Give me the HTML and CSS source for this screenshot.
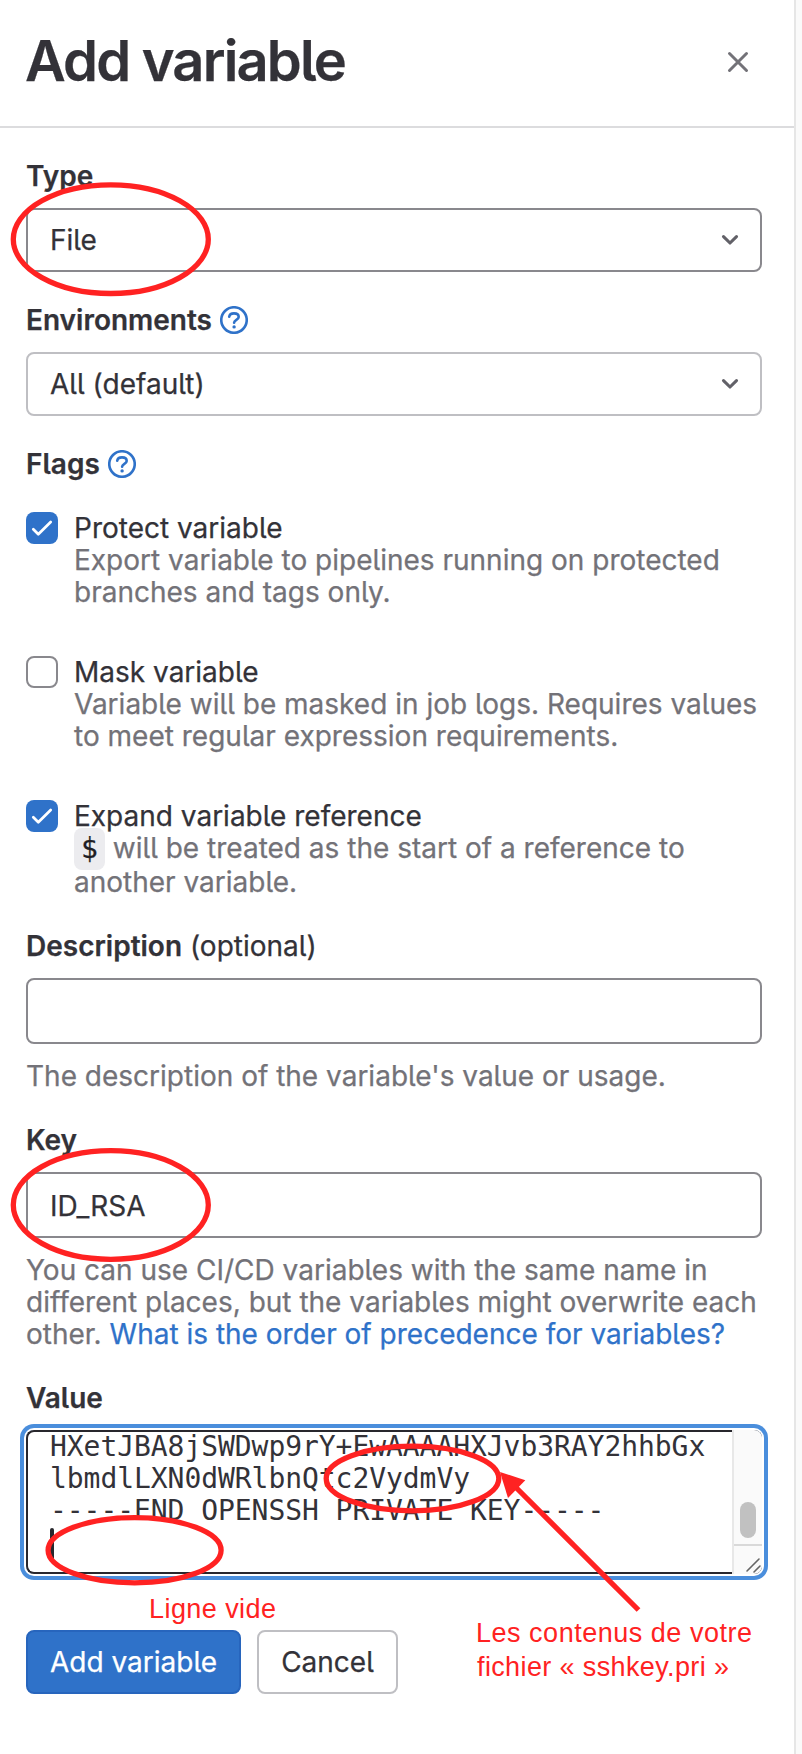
FILE: index.html
```html
<!DOCTYPE html>
<html lang="en">
<head>
<meta charset="utf-8">
<title>Add variable</title>
<link rel="stylesheet" href="styles.css">
</head>
<body>
<div class="drawer">
  <header class="drawer-header">
    <h2 class="title">Add variable</h2>
    <svg class="close" viewBox="0 0 32 32"><path d="M7.500 8.500l17 17M24.500 8.500l-17 17"/></svg>
  </header>
  <main class="form">
    <div class="label"><b>Type</b></div>
    <div class="control"><span>File</span><svg class="chevron" viewBox="0 0 32 32"><path d="M9.500 12.700l6.500 6.300 6.500-6.300"/></svg></div>

    <div class="label mt32"><b>Environments</b><svg class="help-icon" viewBox="0 0 28 28"><circle cx="14" cy="14" r="12.750"/><path d="M9.200 10.800C9.600 8.500 11.500 7.400 14 7.400c2.700 0 4.700 1.400 4.700 3.600 0 2.900-4.600 2.900-4.600 5.800"/><circle class="dot" cx="14.100" cy="20.900" r="1.700"/></svg></div>
    <div class="control light"><span>All (default)</span><svg class="chevron" viewBox="0 0 32 32"><path d="M9.500 12.700l6.500 6.300 6.500-6.300"/></svg></div>

    <div class="label mt32"><b>Flags</b><svg class="help-icon" viewBox="0 0 28 28"><circle cx="14" cy="14" r="12.750"/><path d="M9.200 10.800C9.600 8.500 11.500 7.400 14 7.400c2.700 0 4.700 1.400 4.700 3.600 0 2.900-4.600 2.900-4.600 5.800"/><circle class="dot" cx="14.100" cy="20.900" r="1.700"/></svg></div>
    <div class="checks">
      <div class="check">
        <span class="box on"><svg viewBox="0 0 32 32"><path d="M7.300 17.300l5 5L24.700 10"/></svg></span>
        <div><div>Protect variable</div><p class="muted">Export variable to pipelines running on protected<br>branches and tags only.</p></div>
      </div>
      <div class="check">
        <span class="box"></span>
        <div><div>Mask variable</div><p class="muted">Variable will be masked in job logs. Requires values<br>to meet regular expression requirements.</p></div>
      </div>
      <div class="check">
        <span class="box on"><svg viewBox="0 0 32 32"><path d="M7.300 17.300l5 5L24.700 10"/></svg></span>
        <div><div>Expand variable reference</div><p class="muted expand"><code>$</code> will be treated as the start of a reference to<br>another variable.</p></div>
      </div>
    </div>

    <div class="label mt32"><span><b>Description</b> (optional)</span></div>
    <div class="control input"></div>
    <p class="muted help">The description of the variable's value or usage.</p>

    <div class="label mt32"><b>Key</b></div>
    <div class="control input">ID_RSA</div>
    <p class="muted help">You can use CI/CD variables with the same name in<br>different places, but the variables might overwrite each<br>other. <a>What is the order of precedence for variables?</a></p>

    <div class="label mt32"><b>Value</b></div>
    <div class="textarea">
      <pre class="code">HXetJBA8jSWDwp9rY+EwAAAAHXJvb3RAY2hhbGx
lbmdlLXN0dWRlbnQtc2VydmVy
-----END OPENSSH PRIVATE KEY-----
<i class="caret"></i></pre>
      <div class="scroll">
        <div class="track"><i class="thumb"></i></div>
        <svg class="grip" viewBox="0 0 28 28"><path d="M13 25L25 13M20 26l6-6"/></svg>
      </div>
    </div>

    <div class="actions">
      <button class="btn primary">Add variable</button>
      <button class="btn">Cancel</button>
    </div>
  </main>
  <svg class="notes" viewBox="0 0 802 1754">
    <g class="mark">
      <ellipse cx="110.800" cy="239.200" rx="97.500" ry="54.300"/>
      <ellipse cx="110.800" cy="1205" rx="97.500" ry="54.300"/>
      <ellipse cx="134.600" cy="1550.300" rx="86.500" ry="32.600"/>
      <ellipse cx="412.500" cy="1478.500" rx="86.300" ry="32.300"/>
      <path d="M515 1486.500L638.500 1610"/>
    </g>
    <path class="head" d="M500 1472l25.300 8.300-17.300 17.700z"/>
    <text x="149" y="1618" textLength="127">Ligne vide</text>
    <text x="476" y="1642" textLength="276">Les contenus de votre</text>
    <text x="477" y="1676" textLength="252">fichier « sshkey.pri »</text>
  </svg>
</div>
</body>
</html>
```
FILE: styles.css
```css
* { box-sizing: border-box; }
body {
  margin: 0;
  background: #fafafa;
  color: #333238;
  font: 28px/32px Inter, sans-serif;
  font-feature-settings: "cv05", "ss02" 0;
  -webkit-text-stroke: 0.25px;
}
.drawer {
  position: relative;
  width: 796px;
  height: 1754px;
  background: #fff;
  border-right: 2px solid #e6e6e6;
}
.drawer-header {
  display: flex;
  align-items: center;
  justify-content: space-between;
  height: 128px;
  padding: 0 40px 4px 25px;
  border-bottom: 2px solid #dcdcde;
}
.title { margin: 0; font-size: 56px; line-height: 64px; font-weight: 600; letter-spacing: -1.8px; }
svg { fill: none; stroke-linecap: round; stroke-linejoin: round; display: block; }
.close { width: 32px; height: 32px; stroke: #737278; stroke-width: 3; }
.form { padding: 32px 32px 0 26px; }
b { font-weight: 600; }
p { margin: 0; white-space: nowrap; }
.label { display: flex; align-items: center; gap: 8px; height: 32px; margin-bottom: 16px; white-space: nowrap; }
.mt32 { margin-top: 32px; }
.help-icon { width: 28px; height: 28px; stroke: #2f72c9; stroke-width: 2.6; }
.help-icon .dot { fill: #2f72c9; stroke: none; }
.control {
  display: flex;
  align-items: center;
  justify-content: space-between;
  height: 64px;
  padding: 0 14px 0 22px;
  border: 2px solid #89888d;
  border-radius: 8px;
}
.control.light { border-color: #bfbfc3; }
.control.input { height: 66px; padding-top: 2px; }
.chevron { width: 32px; height: 32px; stroke: #626168; stroke-width: 3.1; }
.checks { display: flex; flex-direction: column; gap: 48px; padding-top: 16px; }
.check { display: flex; gap: 16px; }
.box { width: 32px; height: 32px; flex: none; border: 2px solid #89888d; border-radius: 8px; }
.box.on { border: 0; background: #2f72c9; }
.box svg { stroke: #fff; stroke-width: 2.7; }
.muted { color: #737278; }
.expand { line-height: 34px; margin-top: -1px; margin-bottom: -1px; }
code {
  display: inline-block;
  height: 42px;
  margin: -5px 0;
  padding: 0 7px;
  border-radius: 8px;
  background: #ececef;
  color: #1f1e24;
  font: 28px/41px "DejaVu Sans Mono", monospace;
  vertical-align: baseline;
}
.help { margin-top: 16px; }
a { color: #2f72c9; }
.textarea {
  display: flex;
  justify-content: space-between;
  height: 144px;
  border: 2px solid #28272d;
  border-right: 0;
  border-radius: 8px;
  box-shadow: 0 0 0 2px #fff, 0 0 0 6px #4a8edc;
}
.code {
  margin: -1px 0 0;
  padding-left: 22px;
  font: 28px/32px "DejaVu Sans Mono", monospace;
  letter-spacing: -0.057px;
  -webkit-text-stroke: 0;
}
.caret { display: block; width: 4px; height: 32px; margin-top: 1px; background: #28272d; border-radius: 2px; }
.scroll { width: 30px; margin: -2px 0; border-left: 2px solid #e8e8e8; background: #fafafa; border-radius: 0 8px 8px 0; }
.track { height: 116px; padding: 72px 6px 0; border-bottom: 2px solid #d9d9d9; }
.thumb { display: block; width: 16px; height: 36px; border-radius: 8px; background: #c1c1c1; }
.grip { width: 28px; height: 28px; stroke: #666; stroke-width: 1.6; }
.actions { display: flex; gap: 16px; margin-top: 56px; }
.btn {
  width: 141px;
  height: 64px;
  padding: 0;
  border: 2px solid #bfbfc3;
  border-radius: 8px;
  background: #fff;
  color: #333238;
  font: inherit;
  font-feature-settings: inherit;
}
.btn.primary { width: 215px; border-color: #2765bd; background: #2f72c9; color: #fff; }
.notes { position: absolute; left: 0; top: 0; width: 802px; height: 1754px; }
.mark { stroke: #ff2222; stroke-width: 5.3; stroke-linecap: butt; }
.head { fill: #ff2222; }
.notes text { fill: #ff2222; font: 27px "Liberation Sans", Arial, sans-serif; -webkit-text-stroke: 0; }
```
